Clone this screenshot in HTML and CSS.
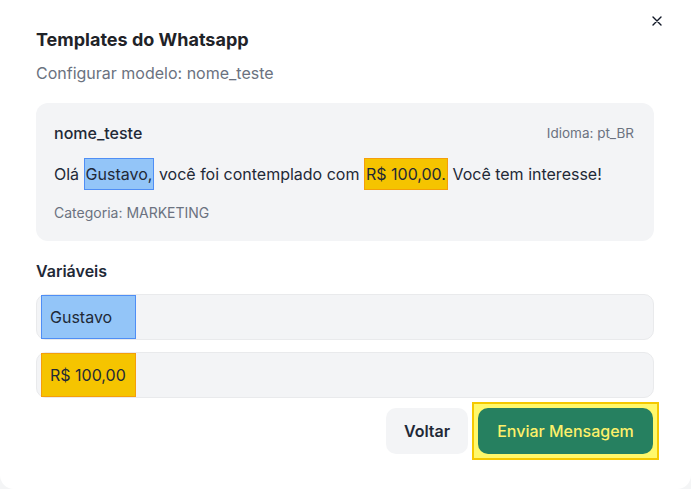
FILE: index.html
```html
<!DOCTYPE html>
<html lang="pt-BR">
<head>
    <meta charset="UTF-8">
    <meta name="viewport" content="width=device-width, initial-scale=1.0">
    <title>Templates do Whatsapp</title>
    <link rel="stylesheet" href="styles.css">
</head>
<body>
    <div class="modal">
        <button class="close" aria-label="Fechar">
            <svg width="10" height="10" viewBox="0 0 10 10"><path d="M1 1L9 9M9 1L1 9" stroke="#111827" stroke-width="1.4" stroke-linecap="round"/></svg>
        </button>

        <h2 class="title">Templates do Whatsapp</h2>
        <p class="subtitle">Configurar modelo: nome_teste</p>

        <!-- preview do template -->
        <div class="card">
            <div class="card-head">
                <span class="name">nome_teste</span>
                <span class="lang">Idioma: pt_BR</span>
            </div>
            <p class="message">Olá <span class="mark mark-blue">Gustavo,</span> você foi contemplado com <span class="mark mark-yellow">R$ 100,00.</span> Você tem interesse!</p>
            <p class="category">Categoria: MARKETING</p>
        </div>

        <h3 class="section">Variáveis</h3>
        <div class="field"><span class="var mark-blue">Gustavo</span></div>
        <div class="field"><span class="var mark-yellow">R$ 100,00</span></div>

        <div class="actions">
            <button class="btn btn-back">Voltar</button>
            <span class="focus-ring"><button class="btn btn-send">Enviar Mensagem</button></span>
        </div>
    </div>
</body>
</html>
```

FILE: styles.css
```css
:root {
    --text-color: #1f2937;
    --muted: #6b7280;
    --soft-bg: #f3f4f6;
}

* {
    box-sizing: border-box;
}

body {
    margin: 0;
    background: #f4f5f6;
    font-family: Inter, 'Noto Sans', sans-serif;
    color: var(--text-color);
}

.modal {
    position: relative;
    background: #ffffff;
    height: 489px;
    padding: 28px 37px 0 36px;
    border-radius: 0 0 14px 14px;
}

.close {
    position: absolute;
    top: 14px;
    right: 27px;
    width: 14px;
    height: 14px;
    padding: 0;
    border: none;
    background: none;
    display: flex;
    align-items: center;
    justify-content: center;
}

.title {
    margin: 0;
    font-size: 18px;
    line-height: 24px;
    font-weight: 700;
    color: #1f2328;
}

.subtitle {
    margin: 11px 0 0;
    font-size: 16px;
    line-height: 20px;
    color: var(--muted);
}

.card {
    margin-top: 20px;
    background: var(--soft-bg);
    border-radius: 12px;
    padding: 20px 20px 19px 18px;
}

.card-head {
    display: flex;
    justify-content: space-between;
    align-items: center;
    height: 20px;
}

.name {
    font-size: 16px;
    font-weight: 500;
}

.lang {
    font-size: 13.5px;
    color: var(--muted);
}

.message {
    margin: 19px 0 0;
    font-size: 16px;
    line-height: 24px;
}

.mark {
    padding: 5px 1px;
    border: 1px solid;
}

.mark-blue {
    background: #93c5f8;
    border-color: #4f8ef5;
}

.mark-yellow {
    background: #f5c400;
    border-color: #f59e0b;
}

.category {
    margin: 18px 0 0;
    font-size: 14px;
    line-height: 18px;
    color: var(--muted);
}

.section {
    margin: 20px 0 13px;
    font-size: 16px;
    line-height: 20px;
    font-weight: 600;
}

.field {
    height: 46px;
    background: var(--soft-bg);
    border: 1px solid #e9eaec;
    border-radius: 10px;
    padding: 0 0 0 4px;
    display: flex;
    align-items: stretch;
    margin-bottom: 12px;
}

.var {
    width: 95px;
    border-width: 1px;
    border-style: solid;
    display: flex;
    align-items: center;
    padding-left: 8px;
    font-size: 16px;
}

.actions {
    display: flex;
    justify-content: flex-end;
    align-items: center;
    gap: 4px;
    margin-right: -5px;
    margin-top: -8px;
}

.btn {
    border: none;
    border-radius: 10px;
    height: 46px;
    font-family: inherit;
    font-size: 16px;
    font-weight: 600;
    cursor: pointer;
}

.btn-back {
    width: 82px;
    background: var(--soft-bg);
    color: var(--text-color);
}

.focus-ring {
    display: flex;
    padding: 4px;
    background: #fff86a;
    border: 2px solid #f5c800;
}

.btn-send {
    width: 175px;
    background: #268060;
    color: #fdf06a;
    font-weight: 500;
}
```
